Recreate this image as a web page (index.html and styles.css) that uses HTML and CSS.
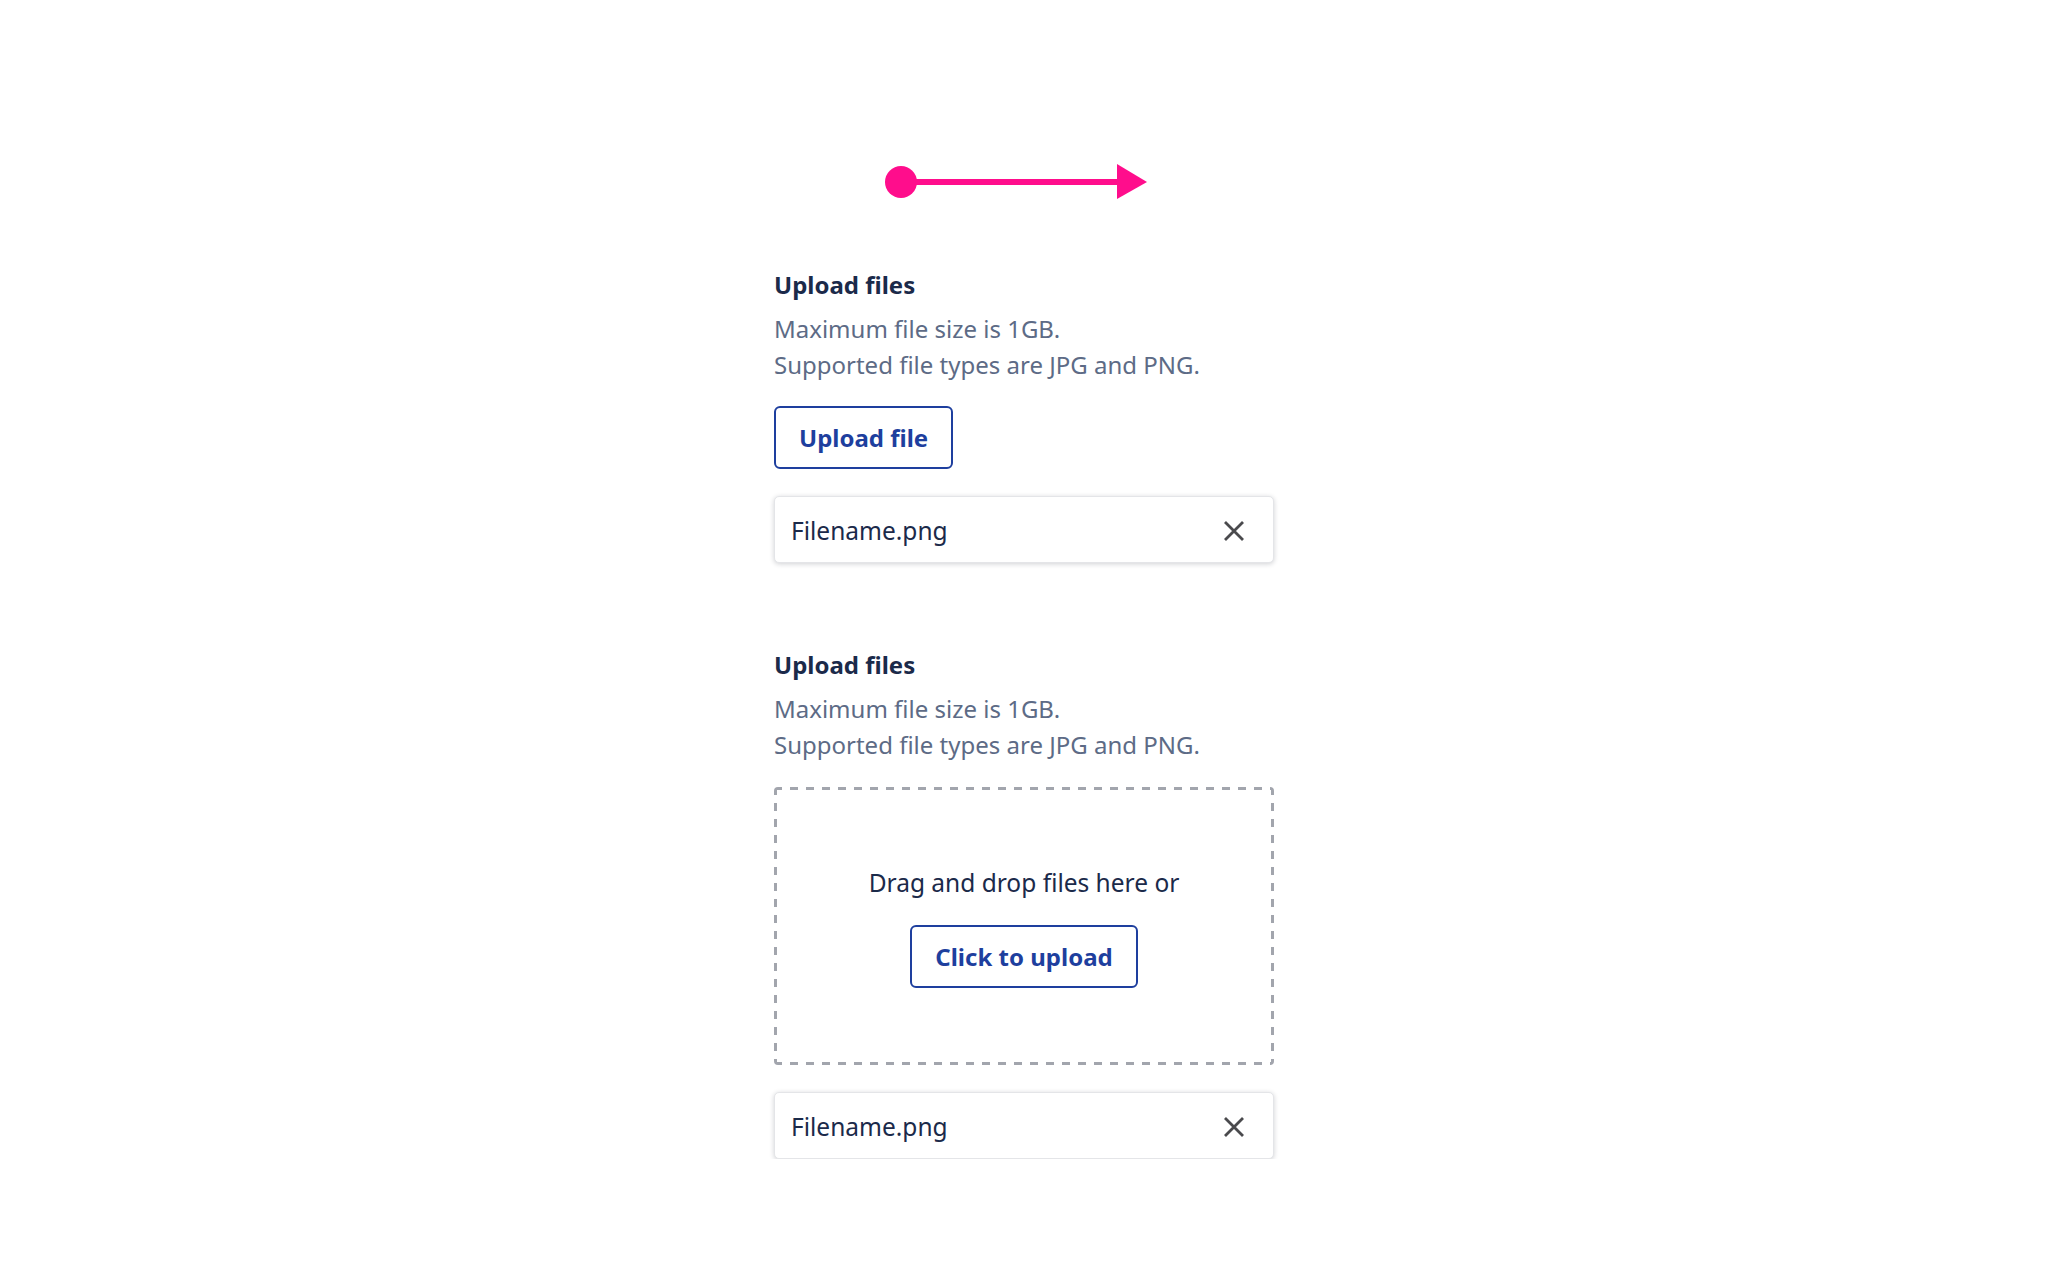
FILE: index.html
```html
<!DOCTYPE html>
<html lang="en">
<head>
<meta charset="utf-8">
<title>Upload files</title>
<link rel="stylesheet" href="styles.css">
</head>
<body>
<main class="page">
  <svg class="flow-arrow" width="500" height="40" viewBox="0 0 500 40" aria-hidden="true">
    <circle cx="127" cy="20" r="16" fill="#ff0d8c"/>
    <rect x="127" y="17" width="220" height="6" fill="#ff0d8c"/>
    <polygon points="343,2 373,20 343,37" fill="#ff0d8c"/>
  </svg>

  <section class="uploader">
    <h2 class="uploader-title">Upload files</h2>
    <p class="uploader-help">Maximum file size is 1GB.<br>Supported file types are JPG and PNG.</p>
    <button class="btn-outline btn-first" type="button">Upload file</button>
    <div class="file-item">
      <span class="file-name">Filename.png</span>
      <svg class="file-remove" width="22" height="22" viewBox="0 0 22 22" aria-hidden="true">
        <path d="M2 2 L20 20 M20 2 L2 20" stroke="#4a4a4d" stroke-width="2.8" fill="none"/>
      </svg>
    </div>
  </section>

  <section class="uploader uploader-second">
    <h2 class="uploader-title">Upload files</h2>
    <p class="uploader-help">Maximum file size is 1GB.<br>Supported file types are JPG and PNG.</p>
    <div class="dropzone">
      <p class="dropzone-text">Drag and drop files here or</p>
      <button class="btn-outline" type="button">Click to upload</button>
    </div>
    <div class="file-item">
      <span class="file-name">Filename.png</span>
      <svg class="file-remove" width="22" height="22" viewBox="0 0 22 22" aria-hidden="true">
        <path d="M2 2 L20 20 M20 2 L2 20" stroke="#4a4a4d" stroke-width="2.8" fill="none"/>
      </svg>
    </div>
  </section>
</main>
</body>
</html>
```

FILE: styles.css
```css
* { box-sizing: border-box; }

html, body {
  margin: 0;
  padding: 0;
  background: #ffffff;
}

body {
  font-family: "Noto Sans", "Open Sans", sans-serif;
  color: #1b2a4a;
}

.page {
  width: 500px;
  margin: 0 auto;
  padding-top: 162px;
  display: flex;
  flex-direction: column;
}

.flow-arrow {
  display: block;
}

.uploader {
  display: flex;
  flex-direction: column;
  align-items: flex-start;
  margin-top: 65px;
}

.uploader-second {
  margin-top: 84px;
}

.uploader-title {
  margin: 0;
  font-size: 24px;
  line-height: 36px;
  font-weight: 700;
  color: #1b2a4a;
}

.uploader-help {
  margin: 8px 0 0;
  font-size: 24px;
  line-height: 36px;
  font-weight: 400;
  color: #5d6b86;
}

.btn-outline {
  font-family: "Noto Sans", "Open Sans", sans-serif;
  font-size: 24px;
  line-height: 35px;
  font-weight: 700;
  color: #1e3f9e;
  background: #ffffff;
  border: 2px solid #1e3f9e;
  border-radius: 6px;
  padding: 12px 23px;
  cursor: pointer;
}

.btn-first {
  margin-top: 23px;
}

.file-item {
  align-self: stretch;
  margin-top: 27px;
  height: 67px;
  display: flex;
  align-items: center;
  justify-content: space-between;
  padding: 2px 28px 0 16px;
  background: #ffffff;
  border: 1px solid #e4e5e8;
  border-radius: 5px;
  box-shadow: 0 1px 5px rgba(20, 25, 40, 0.2);
}

.file-name {
  font-size: 24.5px;
  line-height: 36px;
  color: #1b2a4a;
}

.file-remove {
  display: block;
  flex: none;
}

.dropzone {
  align-self: stretch;
  margin-top: 24px;
  height: 278px;
  border-radius: 4px;
  background:
    repeating-linear-gradient(90deg, #a2a5ad 0 8px, transparent 8px 16px) left top / 100% 3px no-repeat,
    repeating-linear-gradient(90deg, #a2a5ad 0 8px, transparent 8px 16px) left bottom / 100% 3px no-repeat,
    repeating-linear-gradient(180deg, #a2a5ad 0 8px, transparent 8px 16px) left top / 3px 100% no-repeat,
    repeating-linear-gradient(180deg, #a2a5ad 0 8px, transparent 8px 16px) right top / 3px 100% no-repeat;
  display: flex;
  flex-direction: column;
  align-items: center;
  justify-content: center;
}

.dropzone-text {
  margin: 0 0 24px;
  font-size: 24.5px;
  line-height: 36px;
  color: #1b2a4a;
}
```
